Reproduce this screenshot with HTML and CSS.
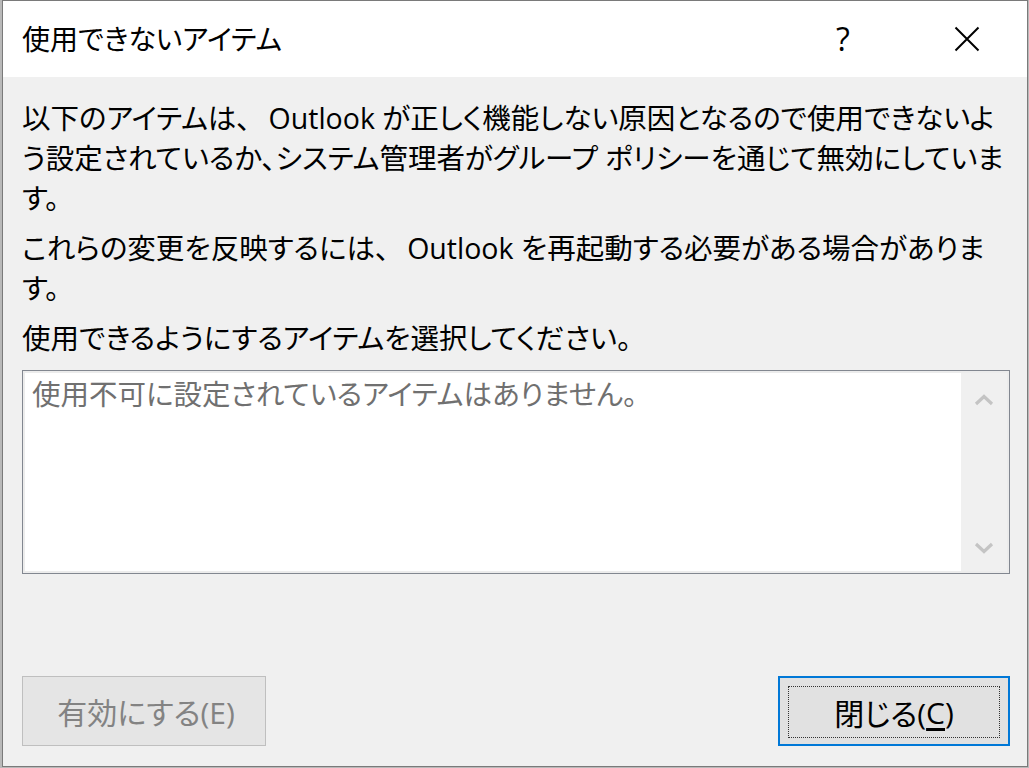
FILE: index.html
```html
<!DOCTYPE html>
<html lang="ja">
<head>
<meta charset="utf-8">
<title>使用できないアイテム</title>
<link rel="stylesheet" href="styles.css">
</head>
<body>
<div class="window">
  <div class="titlebar">
    <span class="title">使用できないアイテム</span>
    <div class="controls">
      <span class="help">?</span>
      <span class="close">
        <svg width="26" height="26" viewBox="0 0 26 26"><path d="M1.5 1.5 L24.5 24.5 M24.5 1.5 L1.5 24.5" stroke="#000" stroke-width="2" fill="none"/></svg>
      </span>
    </div>
  </div>
  <div class="content">
    <p class="msg">以下のアイテムは、<span class="app">Outlook</span> が正しく機能しない原因となるので使用できないよう設定されているか、システム管理者がグループ ポリシーを通じて無効にしています。</p>
    <p class="msg">これらの変更を反映するには、<span class="app">Outlook</span> を再起動する必要がある場合があります。</p>
    <p class="msg">使用できるようにするアイテムを選択してください。</p>
    <div class="listbox">
      <div class="list-items">使用不可に設定されているアイテムはありません。</div>
      <div class="scrollbar">
        <svg class="chev" width="20" height="14" viewBox="0 0 20 14"><path d="M2 11 L10 3.5 L18 11" stroke="#c4c4c4" stroke-width="3.2" fill="none"/></svg>
        <svg class="chev" width="20" height="14" viewBox="0 0 20 14"><path d="M2 3 L10 10.5 L18 3" stroke="#c4c4c4" stroke-width="3.2" fill="none"/></svg>
      </div>
    </div>
    <div class="buttons">
      <button class="btn btn-disabled" disabled>有効にする(E)</button>
      <button class="btn btn-default"><span class="focus">閉じる(<u>C</u>)</span></button>
    </div>
  </div>
</div>
</body>
</html>
```

FILE: styles.css
```css
html, body {
  margin: 0;
  padding: 0;
}
body {
  background: #b9b9b9;
  width: 1029px;
  height: 768px;
  overflow: hidden;
  font-family: "Open Sans", "Noto Sans CJK JP", sans-serif;
  font-feature-settings: "palt";
}
.window {
  box-sizing: border-box;
  margin-left: 2px;
  width: 1026px;
  height: 767px;
  border: 1px solid #7a7a7a;
  background: #f0f0f0;
  display: flex;
  flex-direction: column;
}
.titlebar {
  height: 76px;
  background: #ffffff;
  display: flex;
  align-items: center;
  justify-content: space-between;
  padding-left: 19px;
  flex: none;
}
.title {
  font-size: 28px;
  color: #000;
  line-height: 40px;
}
.controls {
  display: flex;
  align-items: center;
  height: 100%;
}
.help {
  width: 46px;
  text-align: center;
  font-family: "Open Sans", sans-serif;
  font-size: 32px;
  line-height: 40px;
  color: #000;
  margin-right: 71px;
}
.close {
  width: 60px;
  height: 76px;
  display: flex;
  align-items: center;
  justify-content: center;
  margin-right: 30px;
}
.content {
  flex: 1;
  display: flex;
  flex-direction: column;
  padding: 21px 17px 20px 19px;
}
.msg {
  margin: 0 0 10px 0;
  font-size: 28.5px;
  line-height: 40px;
  color: #000;
}
.app {
  margin-left: 18px;
}
.listbox {
  margin-top: 2px;
  height: 204px;
  box-sizing: border-box;
  border: 1px solid #828790;
  padding: 2px;
  background: #ececec;
  display: flex;
}
.list-items {
  flex: 1;
  background: #fff;
  padding: 3px 7px;
  font-size: 28.5px;
  line-height: 36px;
  color: #707070;
}
.scrollbar {
  width: 46px;
  background: #f0f0f0;
  display: flex;
  flex-direction: column;
  justify-content: space-between;
  align-items: center;
  padding: 20px 0 16px;
}
.chev {
  display: block;
}
.buttons {
  margin-top: auto;
  display: flex;
  justify-content: space-between;
  align-items: flex-end;
}
.btn {
  font-family: "Open Sans", "Noto Sans CJK JP", sans-serif;
  font-feature-settings: "palt";
  font-size: 30px;
  height: 70px;
  box-sizing: border-box;
  background: #e1e1e1;
  padding: 0;
  margin: 0;
}
.btn-disabled {
  width: 244px;
  border: 1px solid #bfbfbf;
  background: #e5e5e5;
  color: #838383;
  padding-left: 4px;
}
.btn-default {
  width: 232px;
  border: 2px solid #0078d7;
  color: #000;
  padding: 8px;
}
.focus {
  display: flex;
  align-items: center;
  justify-content: center;
  height: 100%;
  border: 1px dotted #333;
}
.focus u {
  text-underline-offset: 4px;
}
```
